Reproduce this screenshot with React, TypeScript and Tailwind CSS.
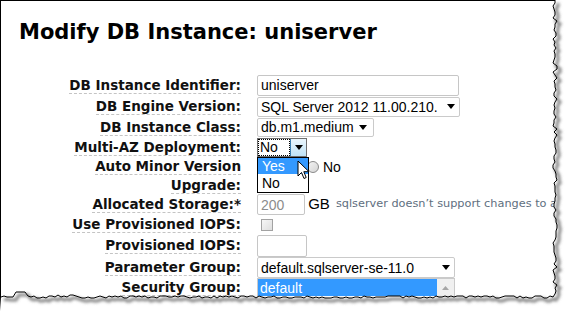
import React from "react";

const label = "font-['DejaVu_Sans',Verdana,sans-serif] font-bold text-[13.5px] leading-[19px] text-[#111]";
const ctl = "font-['Liberation_Sans',Arial,sans-serif] text-[14px] leading-[18px]";

function Arrow({ color = "#000" }: { color?: string }) {
  return (
    <svg width="8" height="5" viewBox="0 0 8 5" className="shrink-0">
      <path d="M0 0h8L4 5z" fill={color} />
    </svg>
  );
}

function Label({ children }: { children: React.ReactNode }) {
  return <span className="border-b border-dashed border-[#c4c4c4]">{children}</span>;
}

function Row({
  text,
  h,
  top,
  children,
}: {
  text: React.ReactNode;
  h: string;
  top?: boolean;
  children?: React.ReactNode;
}) {
  return (
    <>
      <div className={`${h} ${label} flex justify-end text-right ${top ? "items-start" : "items-center"}`}>
        <div>{text}</div>
      </div>
      <div className={`${h} relative flex ${top ? "items-start" : "items-center"}`}>{children}</div>
    </>
  );
}

function tornEdge() {
  let seed = 7;
  const rnd = () => {
    seed = (seed * 9301 + 49297) % 233280;
    return seed / 233280;
  };
  const pts: [number, number][] = [];
  for (let y = 0; y <= 296; y += 3) pts.push([555 + Math.round((rnd() - 0.5) * 4), y]);
  for (let x = 553; x >= 0; x -= 3) {
    let y = 297 + Math.round((rnd() - 0.5) * 3);
    if (x > 15 && x < 28) y = 292;
    if (x > 55 && x < 75) y -= 1;
    pts.push([x, y]);
  }
  return pts;
}

export default function App() {
  const pts = tornEdge();
  const line = pts.map((p, i) => `${i ? "L" : "M"}${p[0]} ${p[1]}`).join(" ");
  const outside = `M571 0 L${pts[0][0]} 0 ${line.replace(/^M/, "L")} L0 311 L571 311 Z`;
  const shadow = pts.map((p, i) => `${i ? "L" : "M"}${p[0] + 3} ${p[1] + 3}`).join(" ");

  return (
    <div className="relative w-[571px] h-[311px] bg-white overflow-hidden">
      <div className="h-[311px] border-l border-t border-black pl-[18px] pt-[19px]">
        <h1 className="font-['DejaVu_Sans',Verdana,sans-serif] font-bold text-[21px] leading-[25px] text-black">
          Modify DB Instance: uniserver
        </h1>
        <div className="mt-[29px] grid grid-cols-[222px_300px] gap-x-4">
          <Row text={<Label>DB Instance Identifier:</Label>} h="h-[22px]">
            <div className={`${ctl} text-black w-[202px] h-[21px] border border-[#c6c6c6] rounded-[2px] pl-[3px] flex items-center`}>
              uniserver
            </div>
          </Row>
          <Row text={<Label>DB Engine Version:</Label>} h="h-[21px]">
            <div className={`${ctl} text-black w-[203px] h-[20px] border border-[#cacaca] rounded-[2px] pl-[3px] pr-[4px] flex items-center justify-between`}>
              <span>SQL Server 2012 11.00.210.</span>
              <Arrow />
            </div>
          </Row>
          <Row text={<Label>DB Instance Class:</Label>} h="h-[20px]">
            <div className={`${ctl} text-black w-[117px] h-[19px] border border-[#cacaca] rounded-[2px] pl-[3px] pr-[6px] flex items-center justify-between`}>
              <span>db.m1.medium</span>
              <Arrow />
            </div>
          </Row>
          <Row text={<Label>Multi-AZ Deployment:</Label>} h="h-[20px]">
            <div className={`${ctl} text-black relative w-[50px] h-[19px] border border-[#6f6f6f] flex`}>
              <div className="flex-1 pl-[2px] flex items-center outline-1 outline-dotted outline-black -outline-offset-1">No</div>
              <div className="w-[16px] flex items-center justify-center bg-gradient-to-b from-[#eaf6fd] to-[#bfe3f7] border-l border-[#3c7fb1]">
                <Arrow />
              </div>
              <div className="absolute left-[-1px] top-[18px] w-[52px] z-10 bg-white border border-black">
                <div className="h-[16px] bg-[#3399ff] text-white pl-[4px] flex items-center">Yes</div>
                <div className="h-[18px] pl-[4px] flex items-center">No</div>
              </div>
              <svg width="13" height="20" viewBox="0 0 13 20" className="absolute left-[39px] top-[21px] z-20">
                <path d="M1 1v15l3.5-3.5 2.5 6 2.2-1-2.4-5.8H12z" fill="#fff" stroke="#000" strokeWidth="1" strokeLinejoin="round" />
              </svg>
            </div>
          </Row>
          <Row text={<Label>Auto Minor Version<br />Upgrade:</Label>} h="h-[37px]" top>
            <div className={`${ctl} text-black h-[19px] flex items-center`}>
              <span className="ml-[50px] w-[12px] h-[12px] rounded-full border border-[#8a8a8a] bg-gradient-to-br from-[#f4f4f4] to-[#d4d4d4]" />
              <span className="ml-[4px]">No</span>
            </div>
          </Row>
          <Row text={<Label>Allocated Storage:*</Label>} h="h-[21px]">
            <div className={`${ctl} text-[#8c8c8c] w-[50px] h-[21px] border border-[#c6c6c6] rounded-[2px] pl-[3px] flex items-center`}>200</div>
            <span className="ml-[3px] font-['Liberation_Sans',Arial,sans-serif] text-[15px] text-black">GB</span>
            <span className="ml-[6px] whitespace-nowrap font-['DejaVu_Sans',Verdana,sans-serif] text-[11.3px] text-[#5e6e7e]">
              sqlserver doesn’t support changes to a
            </span>
          </Row>
          <Row text={<Label>Use Provisioned IOPS:</Label>} h="h-[19px]">
            <div className="ml-[4px] w-[12px] h-[12px] border border-[#a2a2a2] bg-gradient-to-br from-[#f6f6f6] to-[#dedede]" />
          </Row>
          <Row text={<Label>Provisioned IOPS:</Label>} h="h-[23px]">
            <div className="w-[50px] h-[22px] border border-[#c6c6c6] rounded-[2px]" />
          </Row>
          <Row text={<Label>Parameter Group:</Label>} h="h-[21px]">
            <div className={`${ctl} text-black w-[198px] h-[21px] border border-[#cacaca] rounded-[2px] pl-[3px] pr-[4px] flex items-center justify-between`}>
              <span>default.sqlserver-se-11.0</span>
              <Arrow />
            </div>
          </Row>
          <Row text={<Label>Security Group:</Label>} h="h-[21px]" top>
            <div className={`${ctl} text-black w-[198px] h-[30px] border border-[#cacaca] flex`}>
              <div className="flex-1">
                <div className="h-[17px] bg-[#3399ff] text-white pl-[2px] flex items-center">default</div>
              </div>
              <div className="w-[17px] bg-[#f0f0f0] flex justify-center pt-[7px]">
                <svg width="7" height="4" viewBox="0 0 7 4">
                  <path d="M0 4h7L3.5 0z" fill="#a6a6a6" />
                </svg>
              </div>
            </div>
          </Row>
        </div>
      </div>
      <svg width="571" height="311" viewBox="0 0 571 311" className="absolute inset-0 pointer-events-none">
        <defs>
          <filter id="blur" x="-10%" y="-10%" width="120%" height="120%">
            <feGaussianBlur stdDeviation="1.4" />
          </filter>
        </defs>
        <path d={outside} fill="#fff" />
        <path d={shadow} fill="none" stroke="#666" strokeOpacity="0.8" strokeWidth="3" filter="url(#blur)" />
        <path d={line} fill="none" stroke="#000" strokeWidth="1" />
      </svg>
    </div>
  );
}
